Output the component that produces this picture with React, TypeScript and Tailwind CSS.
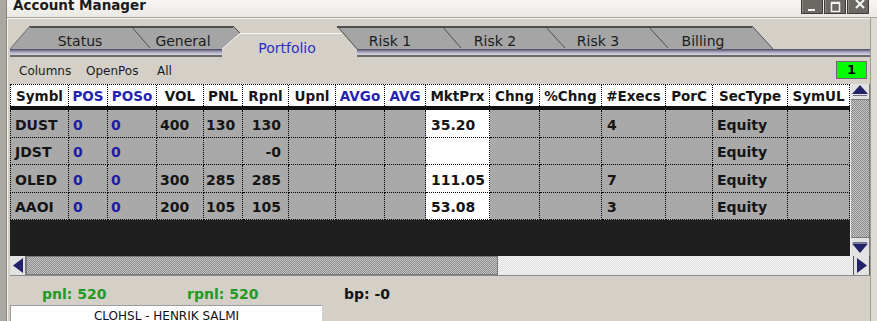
import React from 'react';

interface Column {
  label: string;
  width: string;
  head: string;
  cell: string;
}

const columns: Column[] = [
  { label: 'Symbl', width: 'w-[59px] border-l', head: 'text-[#161616]', cell: 'pl-[4px]' },
  { label: 'POS', width: 'w-[39px]', head: 'text-[#2424b4]', cell: 'pl-[4px] text-[#1d1da3]' },
  { label: 'POSo', width: 'w-[49px]', head: 'text-[#2424b4]', cell: 'pl-[3px] text-[#1d1da3]' },
  { label: 'VOL', width: 'w-[47px]', head: 'text-[#161616]', cell: 'pl-[3px]' },
  { label: 'PNL', width: 'w-[39px]', head: 'text-[#161616]', cell: 'pl-[2px]' },
  { label: 'Rpnl', width: 'w-[46px]', head: 'text-[#161616]', cell: 'justify-end pr-[7px]' },
  { label: 'Upnl', width: 'w-[47px]', head: 'text-[#161616]', cell: '' },
  { label: 'AVGo', width: 'w-[49px]', head: 'text-[#2424b4]', cell: '' },
  { label: 'AVG', width: 'w-[41px]', head: 'text-[#2424b4]', cell: '' },
  { label: 'MktPrx', width: 'w-[64px]', head: 'text-[#161616]', cell: 'pl-[5px] bg-white' },
  { label: 'Chng', width: 'w-[50px]', head: 'text-[#161616]', cell: '' },
  { label: '%Chng', width: 'w-[62px]', head: 'text-[#161616]', cell: '' },
  { label: '#Execs', width: 'w-[64px]', head: 'text-[#161616]', cell: 'pl-[5px]' },
  { label: 'PorC', width: 'w-[47px]', head: 'text-[#161616]', cell: '' },
  { label: 'SecType', width: 'w-[75px]', head: 'text-[#161616]', cell: 'pl-[4px]' },
  { label: 'SymUL', width: 'w-[62px]', head: 'text-[#161616]', cell: '' },
];

const rows = [
  { h: 'h-[28px]', v: ['DUST', '0', '0', '400', '130', '130', '', '', '', '35.20', '', '', '4', '', 'Equity', ''] },
  { h: 'h-[27px]', v: ['JDST', '0', '0', '', '', '-0', '', '', '', '', '', '', '', '', 'Equity', ''] },
  { h: 'h-[28px]', v: ['OLED', '0', '0', '300', '285', '285', '', '', '', '111.05', '', '', '7', '', 'Equity', ''] },
  { h: 'h-[27px]', v: ['AAOI', '0', '0', '200', '105', '105', '', '', '', '53.08', '', '', '3', '', 'Equity', ''] },
];

const darkChecker =
  'bg-[image:repeating-conic-gradient(#8c8c8c_0%_25%,#c4c4c4_0%_50%)] bg-[length:2px_2px]';
const lightChecker =
  'bg-[image:repeating-conic-gradient(#dedede_0%_25%,#f6f6f6_0%_50%)] bg-[length:2px_2px]';

function WindowButtons() {
  return (
    <div className="ml-auto mr-[8px] mt-[-4px] flex gap-[1px]">
      <div className="w-[22px] h-[18px] bg-[#6c6964] border border-[#3e3c39] shadow-[inset_1px_1px_0_#8f8c86]">
        <svg width="20" height="16" viewBox="0 0 20 16">
          <rect x="6" y="12" width="7" height="2" fill="#f4f4f4" />
        </svg>
      </div>
      <div className="w-[22px] h-[18px] bg-[#6c6964] border border-[#3e3c39] shadow-[inset_1px_1px_0_#8f8c86]">
        <svg width="20" height="16" viewBox="0 0 20 16">
          <rect x="6.5" y="5.5" width="8" height="9" fill="none" stroke="#f4f4f4" strokeWidth="1.5" />
          <rect x="6" y="5" width="9" height="2" fill="#f4f4f4" />
        </svg>
      </div>
      <div className="w-[22px] h-[18px] bg-[#6c6964] border border-[#3e3c39] shadow-[inset_1px_1px_0_#8f8c86]">
        <svg width="20" height="16" viewBox="0 0 20 16">
          <path d="M8 3L16 11M16 3L8 11" stroke="#f4f4f4" strokeWidth="2" />
        </svg>
      </div>
    </div>
  );
}

function TabStrip() {
  const labels = [
    { t: 'Status', c: 'ml-[23px] w-[100px] mt-[7px] text-[#1c1c1c]' },
    { t: 'General', c: 'ml-[3px] w-[100px] mt-[7px] text-[#1c1c1c]' },
    { t: 'Portfolio', c: 'ml-[7px] w-[94px] mt-[14px] text-[#2c2cc8]' },
    { t: 'Risk 1', c: 'ml-[8px] w-[96px] mt-[7px] text-[#1c1c1c]' },
    { t: 'Risk 2', c: 'ml-[9px] w-[96px] mt-[7px] text-[#1c1c1c]' },
    { t: 'Risk 3', c: 'ml-[7px] w-[96px] mt-[7px] text-[#1c1c1c]' },
    { t: 'Billing', c: 'ml-[9px] w-[96px] mt-[7px] text-[#1c1c1c]' },
  ];
  return (
    <div className="relative h-[31px] mt-[8px]">
      <svg className="absolute inset-0" width="863" height="31" viewBox="7 0 863 31">
        <defs>
          <linearGradient id="band" x1="0" y1="0" x2="0" y2="1">
            <stop offset="0" stopColor="#4a4764" />
            <stop offset="0.55" stopColor="#aeabc4" />
            <stop offset="1" stopColor="#d8d6e2" />
          </linearGradient>
        </defs>
        <polygon points="10,23 30,0 233,0 240,7 222,23" fill="#a5a5a5" />
        <polygon points="337,0 752,0 773,23 357,23" fill="#a5a5a5" />
        <path d="M30 1H233M337 1H752" stroke="#4e4e4e" strokeWidth="2" />
        <path d="M10 23L30 0" stroke="#6a6a6a" />
        <path d="M131 0L150 22M442 0L461 22M545 0L565 22M648 0L668 22" stroke="#4e4e4e" />
        <path d="M233 0L240 7M752 0L773 23M337 0L357 23" stroke="#4e4e4e" />
        <path d="M222 23L240 7.5H342" stroke="#f6f6f6" fill="none" />
        <rect x="10" y="23" width="212" height="6" fill="url(#band)" />
        <rect x="357" y="23" width="513" height="6" fill="url(#band)" />
        <rect x="10" y="29" width="212" height="2" fill="#6b6b6b" />
        <rect x="357" y="29" width="513" height="2" fill="#6b6b6b" />
      </svg>
      <div className="relative flex items-start text-[14px] leading-[16px]">
        {labels.map((l) => (
          <div key={l.t} className={`shrink-0 text-center ${l.c}`}>
            {l.t}
          </div>
        ))}
      </div>
    </div>
  );
}

function Grid() {
  return (
    <div className="w-[840px] shrink-0 flex flex-col bg-[#1f1f1f]">
      <div className="flex h-[22px] bg-white border-t border-dotted border-black text-[13.5px] leading-[16px] font-bold">
        {columns.map((c) => (
          <div
            key={c.label}
            className={`shrink-0 flex items-center justify-center border-r border-dotted border-black ${c.width} ${c.head}`}
          >
            {c.label}
          </div>
        ))}
      </div>
      <div className="h-[4px] bg-[#101010]" />
      {rows.map((r) => (
        <div key={r.v[0]} className={`flex bg-[#a9a9a9] text-[14px] leading-[16px] font-bold text-[#151515] ${r.h}`}>
          {columns.map((c, i) => (
            <div
              key={c.label}
              className={`shrink-0 flex items-center pt-[2px] border-r border-b border-dotted border-black ${c.width} ${c.cell}`}
            >
              {r.v[i]}
            </div>
          ))}
        </div>
      ))}
    </div>
  );
}

function VScroll() {
  return (
    <div className="w-[20px] shrink-0 flex flex-col bg-[#d4d0c8] border-l border-[#ececec]">
      <div className="h-[16px] flex items-start justify-center pt-[1px] bg-[#e2e2e2] border-r border-b border-[#7a7a7a]">
        <svg width="16" height="11" viewBox="0 0 16 11">
          <path d="M8 0L16 9H0Z" fill="#222268" />
          <path d="M1 10.5H15" stroke="#707088" />
        </svg>
      </div>
      <div className={`flex-1 border-r border-[#7a7a7a] ${darkChecker}`} />
      <div className="h-[19px] flex items-center justify-center bg-[#e2e2e2] border-t border-r border-[#7a7a7a]">
        <svg width="16" height="11" viewBox="0 0 16 11">
          <path d="M1 0.5H15" stroke="#707088" />
          <path d="M0 1.5H16L8 11Z" fill="#222268" />
        </svg>
      </div>
    </div>
  );
}

function HScroll() {
  return (
    <div className="ml-[3px] w-[860px] h-[20px] flex border-b border-[#8a8a8a] bg-[#d4d0c8]">
      <div className="w-[16px] shrink-0 flex items-center justify-center bg-[#e2e2e2] border-r border-[#7a7a7a]">
        <svg width="10" height="15" viewBox="0 0 10 15">
          <path d="M0 7.5L10 0V15Z" fill="#222268" />
        </svg>
      </div>
      <div className={`w-[472px] shrink-0 border border-[#7a7a7a] ${darkChecker}`} />
      <div className={`flex-1 ${lightChecker}`} />
      <div className="w-[17px] shrink-0 flex items-center justify-center bg-[#e2e2e2] border-x border-[#555]">
        <svg width="10" height="15" viewBox="0 0 10 15">
          <path d="M10 7.5L0 0V15Z" fill="#222268" />
        </svg>
      </div>
    </div>
  );
}

export default function App() {
  return (
    <div className="w-[877px] h-[321px] overflow-hidden flex bg-[#dedbd5] font-['DejaVu_Sans',sans-serif]">
      <div className="w-[7px] shrink-0 bg-[#aca8a0] border-r border-[#8a8680]" />
      <div className="flex-1 min-w-0 flex flex-col">
        <div className="h-[18px] shrink-0 flex overflow-hidden bg-gradient-to-b from-[#f7f6f3] to-[#ebe9e4] border-b border-[#a8a59e]">
          <div className="pl-[6px] mt-[-3px] text-[13.5px] leading-[16px] font-bold text-[#1b1b1b]">
            Account Manager
          </div>
          <WindowButtons />
        </div>
        <div className="flex-1 mr-[6px] flex flex-col bg-[#d4d0c8] border-r border-[#9d9a93] shadow-[inset_1px_1px_0_#f4f3f0]">
          <TabStrip />
          <div className="h-[27px] flex items-start text-[12px] leading-[14px] text-[#1a1a1a]">
            <div className="w-[79px] pl-[12px] pt-[7px] shrink-0">Columns</div>
            <div className="w-[71px] pt-[7px] shrink-0">OpenPos</div>
            <div className="pt-[7px]">All</div>
            <div className="ml-auto mr-[3px] mt-[4px] w-[31px] h-[18px] flex items-center justify-center bg-[#00ff00] border border-[#6a6a6a] text-[13px] font-bold text-black">
              1
            </div>
          </div>
          <div className="ml-[3px] w-[860px] h-[172px] flex">
            <Grid />
            <VScroll />
          </div>
          <HScroll />
          <div className="h-[29px] pt-[10px] pl-[35px] flex items-start text-[14px] leading-[16px] font-bold">
            <div className="w-[145px] text-[#229a22]">pnl: 520</div>
            <div className="w-[157px] text-[#229a22]">rpnl: 520</div>
            <div className="text-[#141414]">bp: -0</div>
          </div>
          <div className="ml-[3px] w-[312px] h-[20px] pt-[3px] bg-white border-t border-l border-[#9c9c9c] text-center text-[12px] leading-[14px] text-[#111]">
            CLOHSL - HENRIK SALMI
          </div>
        </div>
      </div>
    </div>
  );
}
